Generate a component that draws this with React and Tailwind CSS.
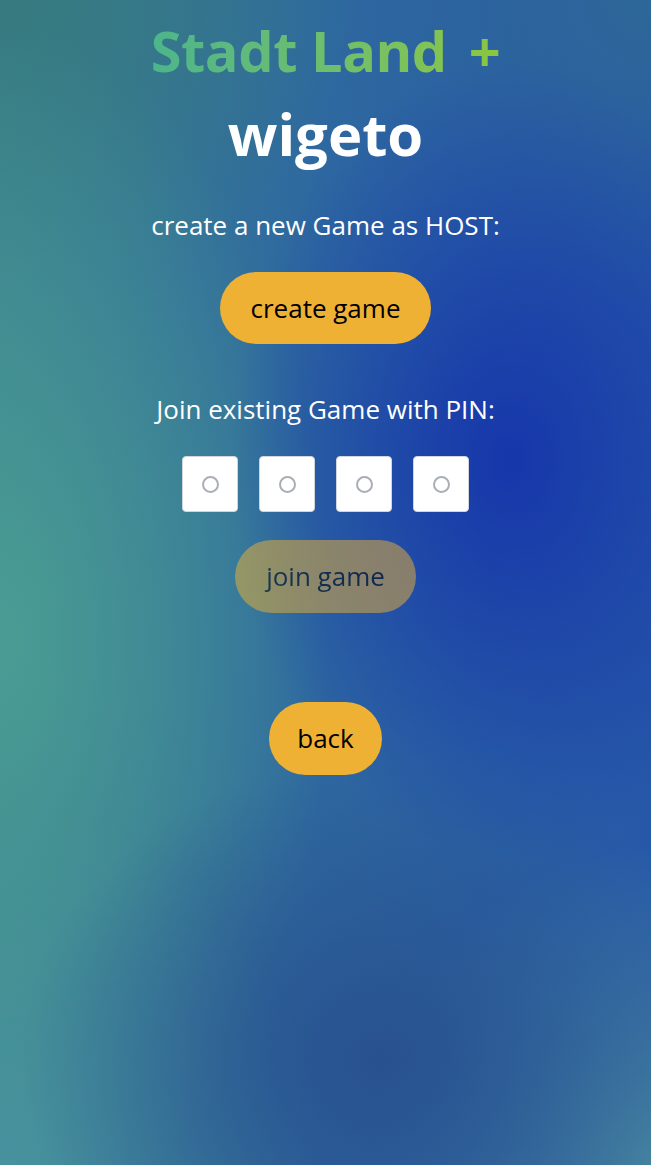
import { useState } from 'react'

export default function App() {
  const [pin, setPin] = useState(['', '', '', ''])

  const updatePin = (i, v) => {
    const next = [...pin]
    next[i] = v.slice(-1)
    setPin(next)
  }

  const ready = pin.every(p => p !== '')

  return (
    <div className="min-h-[1165px] w-full font-['Open_Sans','Noto_Sans',sans-serif] bg-[radial-gradient(ellipse_280px_400px_at_510px_460px,#1636ab_0%,rgba(22,54,171,0)_100%),radial-gradient(ellipse_360px_300px_at_380px_1060px,#28528f_0%,rgba(40,82,143,0)_100%),radial-gradient(ellipse_330px_620px_at_0px_640px,#4a9c94_0%,rgba(74,156,148,0)_100%),radial-gradient(ellipse_320px_360px_at_0px_1165px,#4790a0_0%,rgba(71,144,160,0)_100%),radial-gradient(ellipse_360px_300px_at_0px_0px,#367a7f_0%,rgba(54,122,127,0)_100%),radial-gradient(ellipse_320px_320px_at_651px_0px,#2e6798_0%,rgba(46,103,152,0)_100%),radial-gradient(ellipse_280px_320px_at_651px_1165px,#4a8ca2_0%,rgba(74,140,162,0)_100%),linear-gradient(90deg,#3a808f_0%,#2e68a0_50%,#2658a8_100%)]">
      <div className="flex flex-col items-center text-center">
        {/* Title */}
        <h1 className="mt-[14px] text-[56px] leading-[72px] font-bold tracking-[-0.5px]">
          <span className="bg-gradient-to-r from-[#4cb58c] to-[#8cc63f] bg-clip-text text-transparent">
            Stadt Land <span className="ml-2">+</span>
          </span>
        </h1>
        <h2 className="mt-[8px] text-[58px] leading-[80px] font-bold text-white">wigeto</h2>

        {/* Host */}
        <p className="mt-[34px] text-[26px] leading-[34px] text-white">create a new Game as HOST:</p>
        <button className="mt-[30px] h-[72px] px-[31px] rounded-full bg-[#efb134] text-[26px] text-black">
          create game
        </button>

        {/* Join */}
        <p className="mt-[48px] text-[26px] leading-[34px] text-white">Join existing Game with PIN:</p>
        <div className="mt-[30px] flex gap-[21px]">
          {pin.map((p, i) => (
            <div key={i} className="relative w-[56px] h-[56px] rounded-[4px] bg-white border border-gray-300 flex items-center justify-center">
              {p === '' && (
                <span className="absolute w-[17px] h-[17px] rounded-full border-2 border-[#a9aeb6]" />
              )}
              <input
                value={p}
                onChange={(e) => updatePin(i, e.target.value)}
                className="relative w-full h-full bg-transparent text-center text-[24px] outline-none"
              />
            </div>
          ))}
        </div>
        <button
          disabled={!ready}
          className="mt-[28px] h-[73px] px-[31px] rounded-full bg-[#efb134] text-[26px] text-black disabled:opacity-50"
        >
          join game
        </button>

        {/* Back */}
        <button className="mt-[89px] h-[73px] px-[28px] rounded-full bg-[#efb134] text-[26px] text-black">
          back
        </button>
      </div>
    </div>
  )
}
